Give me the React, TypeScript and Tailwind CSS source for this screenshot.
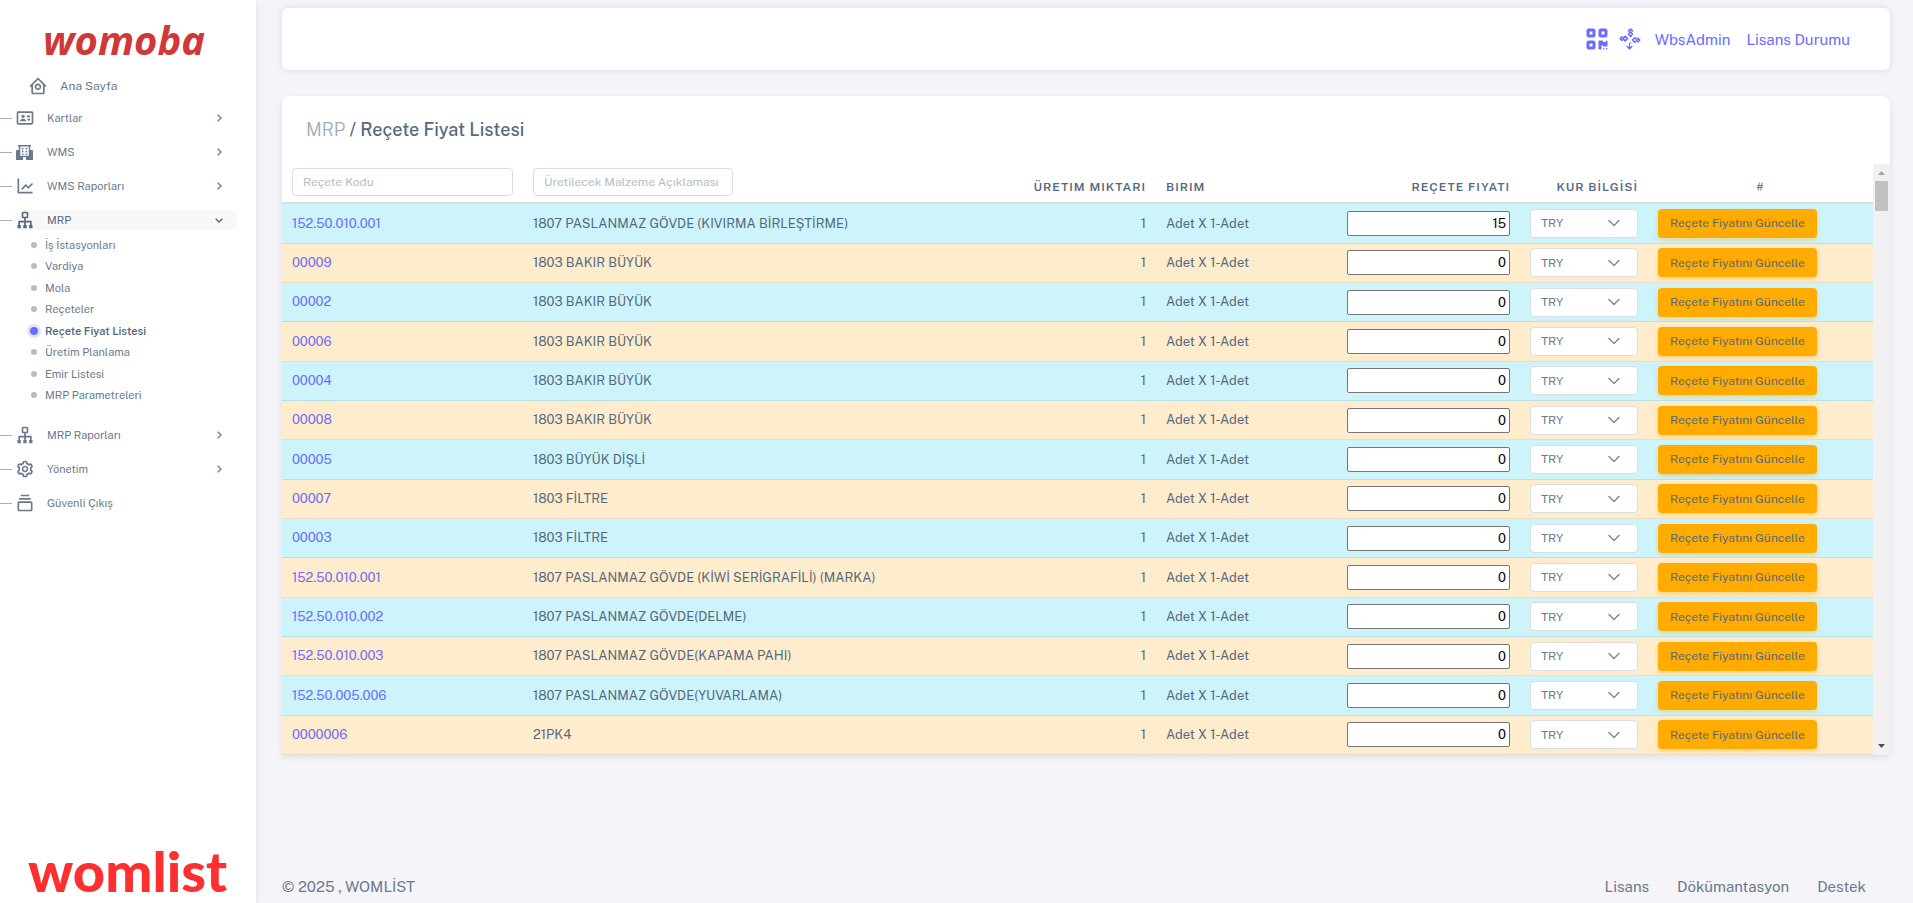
import React from 'react'
import { BiHomeCircle, BiIdCard, BiLineChart, BiSitemap, BiCog, BiCollection, BiChevronRight, BiChevronDown } from 'react-icons/bi'
import { FaQrcode } from 'react-icons/fa6'

type MenuItem = {
  title: string
  icon: React.ReactNode
  arrow?: boolean
  open?: boolean
  children?: string[]
}

const BuildingIcon = () => (
  <svg viewBox="0 0 17 15" className="w-[17px] h-[15px] mx-px" fill="currentColor" aria-hidden="true">
    <path fillRule="evenodd" d="M2 0h13v1.500h-.8V5H16a1 1 0 0 1 1 1v9h-7v-2.800H7V15H0V6a1 1 0 0 1 1-1h1.800V1.500H2zM4.300 1.500V10.800h8.400V1.500z" />
    <path d="M5.800 3h1.700v1.500H5.800zM9.500 3h1.700v1.500H9.500zM5.800 5.700h1.700v1.500H5.800zM9.500 5.700h1.700v1.500H9.500zM5.800 8.400h1.700v1.400H5.800zM9.500 8.400h1.700v1.400H9.500z" />
  </svg>
)

const FlowIcon = () => (
  <svg viewBox="0 0 22 22" className="w-[22px] h-[22px]" fill="none" stroke="currentColor" strokeWidth="1.600" strokeLinejoin="round" aria-hidden="true">
    <path d="M9 3.300l2.500-2.200L14 3.300M11.500 3.800l2 2.300-2 2.300-2-2.300z" />
    <path d="M3.600 8.300 1.200 10.600l2.400 2.300M6.200 8.300l2.300 2.300-2.300 2.300-2.300-2.300z" />
    <path d="M18.400 9.700l2.400 2.300-2.400 2.300M15.800 9.700l2.300 2.300-2.300 2.300-2.300-2.300z" />
    <path d="M7.800 18l2.700 2.700 2.700-2.700" />
    <path d="M10.500 14.500v6M10.500 15h2" strokeWidth="1.100" />
  </svg>
)

const menu: MenuItem[] = [
  { title: 'Kartlar', icon: <BiIdCard />, arrow: true },
  { title: 'WMS', icon: <BuildingIcon />, arrow: true },
  { title: 'WMS Raporları', icon: <BiLineChart />, arrow: true },
  {
    title: 'MRP',
    icon: <BiSitemap />,
    arrow: true,
    open: true,
    children: ['İş İstasyonları', 'Vardiya', 'Mola', 'Reçeteler', 'Reçete Fiyat Listesi', 'Üretim Planlama', 'Emir Listesi', 'MRP Parametreleri'],
  },
  { title: 'MRP Raporları', icon: <BiSitemap />, arrow: true },
  { title: 'Yönetim', icon: <BiCog />, arrow: true },
  { title: 'Güvenli Çıkış', icon: <BiCollection /> },
]

const activePage = 'Reçete Fiyat Listesi'

const recipes = [
  { code: '152.50.010.001', name: '1807 PASLANMAZ GÖVDE (KIVIRMA BİRLEŞTİRME)', price: 15 },
  { code: '00009', name: '1803 BAKIR BÜYÜK', price: 0 },
  { code: '00002', name: '1803 BAKIR BÜYÜK', price: 0 },
  { code: '00006', name: '1803 BAKIR BÜYÜK', price: 0 },
  { code: '00004', name: '1803 BAKIR BÜYÜK', price: 0 },
  { code: '00008', name: '1803 BAKIR BÜYÜK', price: 0 },
  { code: '00005', name: '1803 BÜYÜK DİŞLİ', price: 0 },
  { code: '00007', name: '1803 FİLTRE', price: 0 },
  { code: '00003', name: '1803 FİLTRE', price: 0 },
  { code: '152.50.010.001', name: '1807 PASLANMAZ GÖVDE (KİWİ SERİGRAFİLİ) (MARKA)', price: 0 },
  { code: '152.50.010.002', name: '1807 PASLANMAZ GÖVDE(DELME)', price: 0 },
  { code: '152.50.010.003', name: '1807 PASLANMAZ GÖVDE(KAPAMA PAHI)', price: 0 },
  { code: '152.50.005.006', name: '1807 PASLANMAZ GÖVDE(YUVARLAMA)', price: 0 },
  { code: '0000006', name: '21PK4', price: 0 },
]

const Sidebar = () => {
  return (
    <aside className="w-64 shrink-0 bg-white flex flex-col justify-between shadow-[0_2px_6px_rgba(67,89,113,0.12)]">
      <div>
        <a href="#" className="block pt-4 pl-[43px] h-[70px] font-['Noto_Sans',sans-serif] italic font-bold text-[40px] leading-[48px] text-[#d03838]">womoba</a>
        <nav className="text-[11px] text-[#697a8d]">
          <a href="#" className="flex items-center h-8 pl-7 -mb-px text-xs">
            <BiHomeCircle className="w-5 h-5 mr-3" />
            Ana Sayfa
          </a>
          <ul>
            {menu.map((item) => (
              <li key={item.title}>
                <div className="flex items-center h-[34px]">
                  <span className="w-3 h-px bg-[#a5b0bc]" />
                  <a href="#" className={item.open ? 'flex items-center h-5 ml-[3px] w-[222px] rounded-md bg-[#f8f8f8] text-[#566a7f]' : 'flex items-center h-5 ml-[3px] w-[222px]'}>
                    <span className="text-xl w-8 flex">{item.icon}</span>
                    <span className="flex-1">{item.title}</span>
                    {item.arrow && (item.open ? <BiChevronDown className="w-4 h-4 mr-2.5" /> : <BiChevronRight className="w-4 h-4 mr-2.5" />)}
                  </a>
                </div>
                {item.children && (
                  <ul className="grid auto-rows-fr h-[172px] -mt-[3px] mb-3">
                    {item.children.map((child) => (
                      <li key={child} className="flex">
                        <a href="#" className={child === activePage ? 'flex items-center font-semibold text-[#566a7f]' : 'flex items-center'}>
                          <span className="w-[45px] flex justify-end pr-1">
                            {child === activePage ? (
                              <span className="w-3.5 h-3.5 rounded-full bg-[#696cff] border-3 border-[#e1e2ff]" />
                            ) : (
                              <span className="w-1.5 h-1.5 mr-1 rounded-full bg-[#b4bdc6]" />
                            )}
                          </span>
                          {child}
                        </a>
                      </li>
                    ))}
                  </ul>
                )}
              </li>
            ))}
          </ul>
        </nav>
      </div>
      <div className="pl-7 h-16 font-['Lato',sans-serif] font-black text-[56px] leading-[64px] text-[#fd2f2f]">womlist</div>
    </aside>
  )
}

const Navbar = () => {
  return (
    <header className="flex items-center justify-end h-[62px] pr-10 rounded-md bg-white shadow-[0_0_6px_rgba(67,89,113,0.15)] text-[15px] text-[#696cff]">
      <button type="button" aria-label="Karekod" className="mr-2.5"><FaQrcode className="w-6 h-6" /></button>
      <button type="button" aria-label="Akış" className="mr-3.5"><FlowIcon /></button>
      <a href="#" className="mr-4 pt-0.5">WbsAdmin</a>
      <a href="#" className="pt-0.5">Lisans Durumu</a>
    </header>
  )
}

const RecipeTable = () => {
  return (
    <table className="flex-1 h-[591px] table-fixed text-[13px]">
      <colgroup>
        <col className="w-[241px]" />
        <col />
        <col className="w-[180px]" />
        <col className="w-[160px]" />
        <col className="w-[204px]" />
        <col className="w-32" />
        <col className="w-[225px]" />
      </colgroup>
      <thead>
        <tr className="h-[39px] border-b-2 border-[#d9dee3] text-xs tracking-[1px] text-[#566a7f]">
          <th className="px-2.5 pb-0.5 font-normal">
            <input type="text" aria-label="Reçete Kodu" placeholder="Reçete Kodu" className="block w-full h-7 px-2.5 rounded border border-[#d9dee3] tracking-normal placeholder:text-[#b4bdc6]" />
          </th>
          <th className="px-2.5 pb-0.5 font-normal">
            <input type="text" aria-label="Üretilecek Malzeme Açıklaması" placeholder="Üretilecek Malzeme Açıklaması" className="block w-[200px] h-7 px-2.5 rounded border border-[#d9dee3] tracking-normal placeholder:text-[#b4bdc6]" />
          </th>
          <th className="px-2.5 pt-2 text-right font-semibold">ÜRETIM MIKTARI</th>
          <th className="px-2.5 pt-2 text-left font-semibold">BIRIM</th>
          <th className="px-2.5 pt-2 text-right font-semibold">REÇETE FIYATI</th>
          <th className="px-2.5 pt-2 text-right font-semibold">KUR BİLGİSİ</th>
          <th className="px-2.5 pt-2 text-center font-semibold">#</th>
        </tr>
      </thead>
      <tbody className="text-[#566a7f]">
        {recipes.map((recipe, i) => (
          <tr key={i} className="border-b odd:border-[#b5e2ea] even:border-[#e6dcc8] odd:bg-[#cdf4fb] even:bg-[#ffeccc]">
            <td className="px-2.5"><a href="#" className="text-[#696cff]">{recipe.code}</a></td>
            <td className="px-2.5">{recipe.name}</td>
            <td className="px-2.5 text-right">1</td>
            <td className="px-2.5">Adet X 1-Adet</td>
            <td className="px-2.5">
              <input type="text" aria-label="Reçete Fiyatı" defaultValue={recipe.price} className="block ml-auto w-[163px] h-[25px] px-[3px] rounded-xs border border-[#767676] bg-white text-right text-black" />
            </td>
            <td className="px-2.5">
              <div className="grid items-center">
                <select aria-label="Kur Bilgisi" className="col-start-1 row-start-1 w-full h-[29px] px-2.5 appearance-none rounded border border-[#d9dee3] bg-white text-xs text-[#697a8d]">
                  <option>TRY</option>
                </select>
                <svg viewBox="0 0 12 8" className="col-start-1 row-start-1 justify-self-end w-3 h-2 mr-[18px] pointer-events-none" fill="none" stroke="#7b8a9a" strokeWidth="1.500" strokeLinecap="round" aria-hidden="true">
                  <path d="M1 1.500l5 5 5-5" />
                </svg>
              </div>
            </td>
            <td className="px-2.5">
              <button type="button" className="block h-[29px] px-3 rounded bg-[#ffab00] text-xs shadow-[0_2px_4px_rgba(255,171,0,0.4)]">Reçete Fiyatını Güncelle</button>
            </td>
          </tr>
        ))}
      </tbody>
    </table>
  )
}

const ScrollTrack = () => (
  <div className="w-[17px] shrink-0 flex flex-col items-center bg-[#f1f1f1]" aria-hidden="true">
    <svg viewBox="0 0 17 17" className="w-[17px] h-[17px]" fill="#a3a3a3"><path d="M5 11h7L8.500 7z" /></svg>
    <div className="w-[13px] h-[30px] bg-[#c1c1c1]" />
    <svg viewBox="0 0 17 17" className="w-[17px] h-[17px] mt-auto" fill="#505050"><path d="M5 6h7l-3.500 4z" /></svg>
  </div>
)

const App = () => {
  return (
    <div className="flex min-h-screen bg-[#f4f4f9] font-['Public_Sans','Inter',sans-serif]">
      <Sidebar />
      <div className="flex-1 flex flex-col pl-[26px] pr-[23px] pt-2">
        <Navbar />
        <main className="mt-[26px] bg-white rounded-t-lg shadow-[0_2px_6px_rgba(67,89,113,0.12)]">
          <h4 className="h-[68px] pl-6 pt-5 text-lg font-medium text-[#566a7f]"><span className="font-light text-[#a1acb8]">MRP</span> / Reçete Fiyat Listesi</h4>
          <div className="flex">
            <RecipeTable />
            <ScrollTrack />
          </div>
        </main>
        <footer className="mt-auto flex justify-between pr-6 pb-[5px] text-[15px] leading-[22px] text-[#697a8d]">
          <span>© 2025 , WOMLİST</span>
          <div className="flex gap-7">
            <a href="#">Lisans</a>
            <a href="#">Dökümantasyon</a>
            <a href="#">Destek</a>
          </div>
        </footer>
      </div>
    </div>
  )
}

export default App
